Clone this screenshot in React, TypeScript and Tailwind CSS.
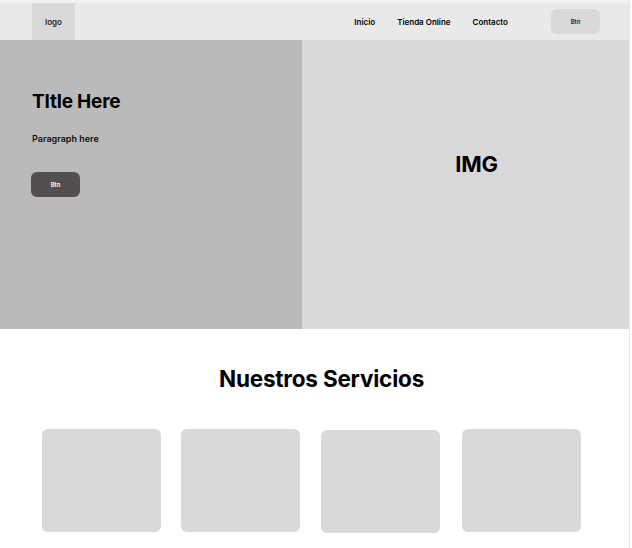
import React from "react";

const services = [
  { id: 1, offset: "mt-0" },
  { id: 2, offset: "mt-0" },
  { id: 3, offset: "mt-px ml-px" },
  { id: 4, offset: "mt-0 ml-[2px]" },
];

const App = () => {
  return (
    <div className="w-[632px] h-[548px] bg-white overflow-hidden font-['Inter',sans-serif] text-black">
      <div className="w-[630px] h-full border-r border-[#e6e6e6]">
        {/* Top strip */}
        <div className="h-[3px] bg-[#f2f2f2]" />

        {/* Navbar */}
        <nav className="h-[37px] bg-[#e9e9e9] flex items-center pl-8 pr-[29px]">
          <div className="w-[43px] h-full bg-[#d9d9d9] flex items-center justify-center">
            <span className="text-[8px] font-semibold text-[#222]">logo</span>
          </div>
          <div className="ml-auto flex items-center">
            <a className="text-[8px] font-semibold mr-[22px]">Inicio</a>
            <a className="text-[8px] font-semibold mr-[22px]">Tienda Online</a>
            <a className="text-[8px] font-semibold">Contacto</a>
            <button className="ml-[43px] w-[49px] h-[25px] mb-[1px] rounded-md bg-[#d9d9d9] text-[6px] font-semibold text-[#222]">
              Btn
            </button>
          </div>
        </nav>

        {/* Hero */}
        <section className="h-[289px] flex">
          <div className="w-[302px] bg-[#bababa] pl-8 pt-[51px]">
            <h1 className="text-[19px] font-bold leading-[22px] tracking-[-0.2px]">TItle Here</h1>
            <p className="mt-[19px] text-[9px] font-semibold text-[#111]">Paragraph here</p>
            <button className="mt-[26px] -ml-px w-[49px] h-[25px] rounded-md bg-[#544f4f] text-[6px] font-semibold text-white">
              Btn
            </button>
          </div>
          <div className="flex-1 bg-[#d9d9d9] flex items-center justify-center pl-[22px] pb-[40px]">
            <span className="text-[22px] font-bold tracking-[-0.3px]">IMG</span>
          </div>
        </section>

        {/* Services */}
        <section className="pt-[36px]">
          <h2 className="text-center text-[22.5px] font-bold leading-[28px] tracking-[-0.2px] pl-[14px]">
            Nuestros Servicios
          </h2>
          <div className="mt-[36px] flex pl-[42px] gap-[20px]">
            {services.map((s) => (
              <div key={s.id} className={`w-[119px] h-[103px] rounded-md bg-[#d9d9d9] ${s.offset}`} />
            ))}
          </div>
        </section>
      </div>
    </div>
  );
};

export default App;
